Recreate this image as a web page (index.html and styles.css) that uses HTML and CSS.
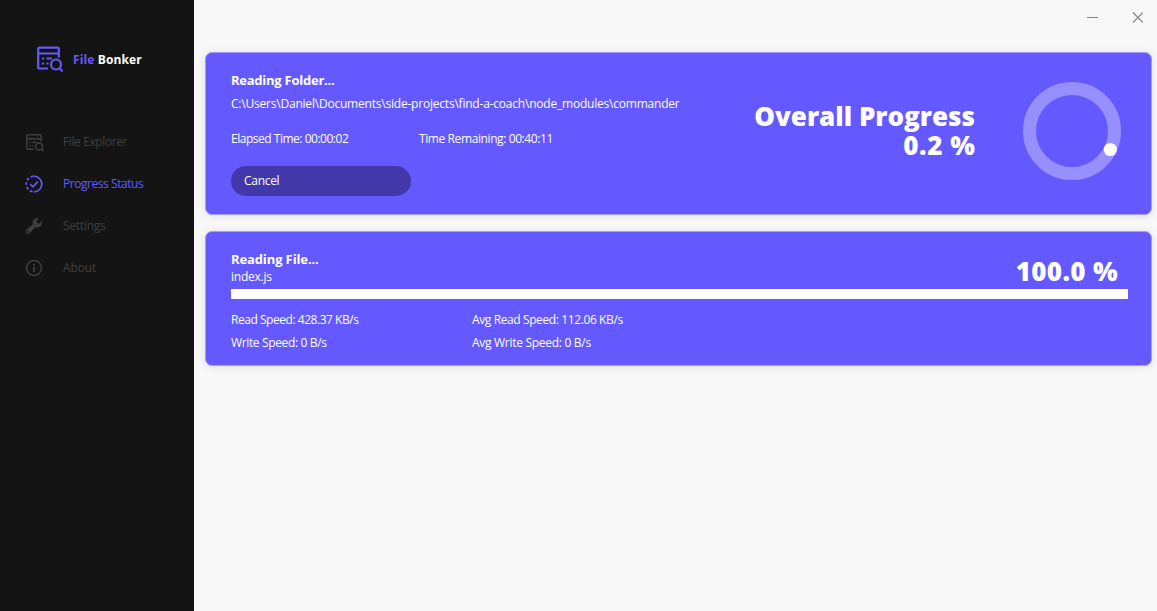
FILE: index.html
```html
<!DOCTYPE html>
<html lang="en">
<head>
<meta charset="utf-8">
<title>File Bonker</title>
<link rel="stylesheet" href="styles.css">
</head>
<body>
<div class="app">
  <aside class="sidebar">
    <div class="brand">
      <svg class="brand-icon" viewBox="0 0 26 26" fill="none" stroke="currentColor" stroke-width="2.2"><path d="M11 22H2.5Q1.2 22 1.2 20.7V2.5Q1.2 1.2 2.5 1.2H20.5Q21.8 1.2 21.8 2.5V11M1.2 7H21.8"/><path d="M5 12H7.2M9.5 12H15M5 17H7.2M9.5 17H11.5"/><circle cx="19" cy="18" r="5"/><path d="M22.5 21.5L25.5 25"/></svg>
      <span class="brand-name"><span class="accent">File</span> Bonker</span>
    </div>
    <nav class="nav">
      <a class="nav-item"><svg class="nav-icon explorer-icon" viewBox="0 0 26 26" fill="none" stroke="currentColor" stroke-width="2.2"><path d="M11 22H2.5Q1.2 22 1.2 20.7V2.5Q1.2 1.2 2.5 1.2H20.5Q21.8 1.2 21.8 2.5V11M1.2 7H21.8"/><path d="M5 12H7.2M9.5 12H15M5 17H7.2M9.5 17H11.5"/><circle cx="19" cy="18" r="5"/><path d="M22.5 21.5L25.5 25"/></svg><span class="label-explorer">File Explorer</span></a>
      <a class="nav-item active"><svg class="nav-icon" viewBox="0 0 18 18" fill="none" stroke="currentColor" stroke-width="1.7"><path d="M9 1.2A7.8 7.8 0 0 1 9 16.8"/><path d="M9 16.8A7.8 7.8 0 0 1 9 1.2" stroke-dasharray="2.8 2.1" stroke-dashoffset="-1.4"/><path d="M5.3 9.2L8 11.8L12.8 6.6"/></svg><span class="label-progress">Progress Status</span></a>
      <a class="nav-item"><svg class="nav-icon" viewBox="0 0 18 18" fill="currentColor"><path fill-rule="evenodd" d="M13.8 1.2L11.6 3.5L12 6L14.5 6.4L16.8 4.1C17.5 6.1 17 8 15.5 9.3C14 10.5 12.3 10.7 10.5 10L4.4 16.3C3.4 17.3 2 17.2 1.2 16.3C.4 15.4.4 14.2 1.3 13.3L8 7.3C7.3 5.5 7.7 3.5 9.1 2.2C10.4 1 12.1.6 13.8 1.2ZM2.8 13.8A1 1 0 1 0 2.8 15.8A1 1 0 1 0 2.8 13.8Z"/></svg><span class="label-settings">Settings</span></a>
      <a class="nav-item"><svg class="nav-icon" viewBox="0 0 18 18" fill="none" stroke="currentColor" stroke-width="1.5"><circle cx="9" cy="9" r="7.5"/><path d="M9 8V13M9 5V6.8" stroke-width="1.8"/></svg><span class="label-about">About</span></a>
    </nav>
  </aside>
  <main class="main">
    <header class="titlebar">
      <svg class="window-controls" viewBox="0 0 56 12" fill="none" stroke="#858585"><path d="M0 6.5H11"/><path d="M46 1.5L56 11.5M56 1.5L46 11.5" stroke-width="1.2"/></svg>
    </header>
    <section class="card overall">
      <div class="folder">
        <h2 class="folder-title">Reading Folder...</h2>
        <p class="path">C:\Users\Daniel\Documents\side-projects\find-a-coach\node_modules\commander</p>
        <div class="times"><span class="elapsed">Elapsed Time: 00:00:02</span><span class="remaining">Time Remaining: 00:40:11</span></div>
        <button class="cancel">Cancel</button>
      </div>
      <div class="total"><div class="total-label">Overall Progress</div><div class="total-value">0.2 %</div></div>
      <svg class="ring" viewBox="0 0 98 98"><circle cx="49" cy="49" r="42.5" fill="none" stroke="#978fff" stroke-width="13"/><circle cx="87.3" cy="67.5" r="6.6" fill="#fff"/></svg>
    </section>
    <section class="card file">
      <div class="file-head">
        <div><h2 class="file-title">Reading File...</h2><p class="file-name">index.js</p></div>
        <div class="percent">100.0 %</div>
      </div>
      <div class="bar"></div>
      <div class="stats">
        <span class="read">Read Speed: 428.37 KB/s</span><span class="avg-read">Avg Read Speed: 112.06 KB/s</span>
        <span class="write">Write Speed: 0 B/s</span><span class="avg-write">Avg Write Speed: 0 B/s</span>
      </div>
    </section>
  </main>
</div>
</body>
</html>
```

FILE: styles.css
```css
* { box-sizing: border-box; }
body { margin: 0; font: 12px/16px "Open Sans", "Noto Sans", sans-serif; letter-spacing: -0.25px; color: #fff; }
h2, p { margin: 0; }
.app { display: flex; width: 1157px; height: 611px; background: #f8f8f8; }
.sidebar { width: 194px; background: #141414; }
.brand { display: flex; align-items: center; gap: 10px; padding: 46px 0 0 37px; color: #6359ff; height: 73px; }
.brand-icon { width: 26px; height: 27px; }
.brand-name { font-weight: 700; color: #fff; white-space: nowrap; letter-spacing: .13px; }
.accent { color: #6359ff; }
.nav { padding-top: 48px; }
.nav-item { display: flex; align-items: center; gap: 20px; height: 42px; padding-left: 25px; color: #3f3f3f; }
.nav-item.active { color: #6359ff; }
.nav-icon { width: 18px; height: 18px; }
.explorer-icon { margin: 2px -1px 0 1px; }
.label-explorer { letter-spacing: -.39px; }
.label-progress { letter-spacing: -.45px; }
.label-about { letter-spacing: -.12px; }
.main { flex: 1; padding: 0 5px 0 11px; }
.titlebar { display: flex; justify-content: flex-end; height: 52px; padding: 11px 9px 0 0; }
.window-controls { width: 56px; height: 12px; }
.card { border: 1px solid #a39dfd; border-radius: 7px; background: #6359ff; box-shadow: 0 1px 8px rgba(0, 0, 0, .1); }
.overall { display: flex; height: 163px; padding: 18px 30px 0 25px; }
.folder { width: 480px; white-space: nowrap; }
.folder-title, .file-title { font-size: 13px; line-height: 18px; font-weight: 700; }
.file-title { letter-spacing: -.12px; }
.path { margin-top: 7px; letter-spacing: -.21px; }
.times { display: flex; margin-top: 19px; }
.elapsed { width: 188px; letter-spacing: -.48px; }
.remaining { letter-spacing: -.4px; }
.cancel { display: block; width: 180px; height: 30px; margin-top: 19px; padding: 0 13px; border: 0; border-radius: 15px; background: #4338a9; color: #fff; font: inherit; letter-spacing: -.3px; text-align: left; }
.total { width: 264px; padding-top: 31px; text-align: right; font-size: 26px; font-weight: 800; line-height: 29px; letter-spacing: 0; white-space: nowrap; }
.total-value { margin-right: -.6px; letter-spacing: .6px; }
.ring { width: 98px; height: 98px; margin: 11px 0 0 auto; }
.file { height: 135px; margin-top: 16px; padding: 18px 23px 0 25px; }
.file-head { display: flex; justify-content: space-between; height: 39px; }
.file-name { line-height: 18px; }
.percent { padding: 5px 10px 0 0; font-size: 26px; font-weight: 800; line-height: 32px; letter-spacing: .35px; }
.bar { height: 10px; background: #fff; }
.stats { display: grid; grid-template-columns: 241px 1fr; grid-auto-rows: 23px; padding-top: 13px; }
.read { letter-spacing: -.46px; }
.avg-read { letter-spacing: -.39px; }
.write { letter-spacing: -.36px; }
.avg-write { letter-spacing: -.29px; }
```
